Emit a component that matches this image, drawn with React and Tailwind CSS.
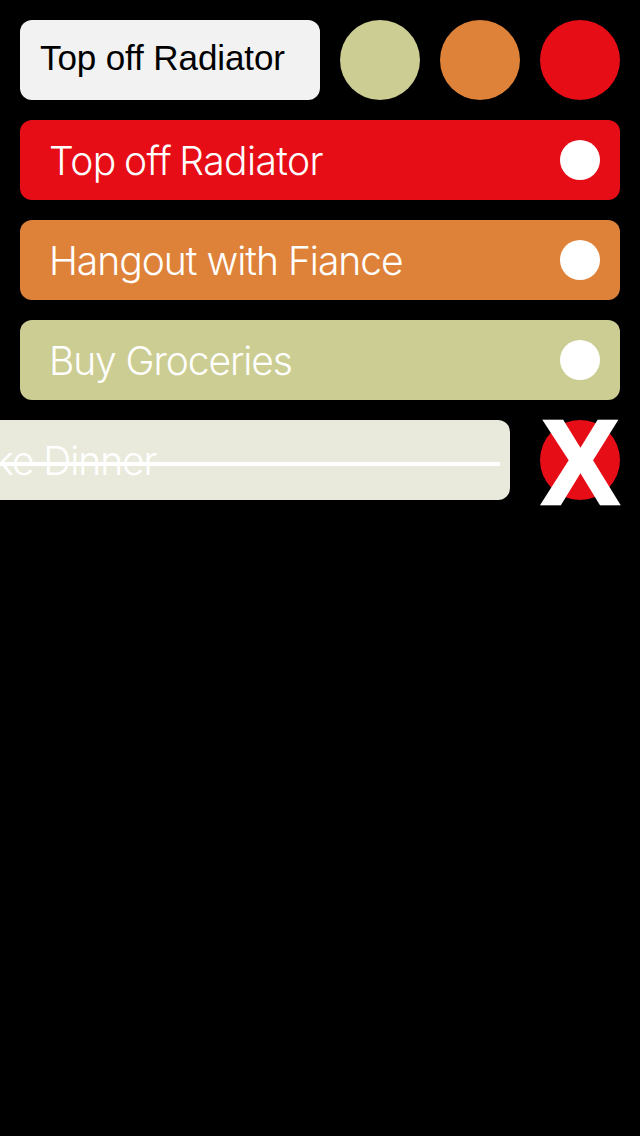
const tasks = [
  { label: 'Top off Radiator', bg: 'bg-[#e70d17]', text: '-ml-px tracking-[-0.6px] [word-spacing:-2px]' },
  { label: 'Hangout with Fiance', bg: 'bg-[#df8239]', text: '-ml-px tracking-[-1px]' },
  { label: 'Buy Groceries', bg: 'bg-[#cccd92]', text: '-ml-px tracking-[-1.1px]' },
];

const swatches = ['bg-[#cccd92]', 'bg-[#df8239]', 'bg-[#e70d17]'];

function Task({ label, bg, text }) {
  return (
    <li className={`flex h-20 items-center justify-between rounded-xl pl-[30px] pr-5 ${bg}`}>
      <span className={`whitespace-nowrap font-['Inter','Liberation_Sans',sans-serif] text-[39px] font-light leading-none text-white ${text}`}>{label}</span>
      <span className="size-10 rounded-full bg-white" />
    </li>
  );
}

export default function App() {
  return (
    <main className="flex h-[1136px] w-[640px] flex-col gap-5 overflow-hidden bg-black p-5">
      <header className="flex gap-5">
        <div className="flex h-20 w-[300px] items-center rounded-xl bg-[#f2f2f2] pl-5 pb-[5px]">
          <span className="whitespace-nowrap font-['Liberation_Sans',Arial,sans-serif] text-[35px] leading-none tracking-[-0.1px] text-black">Top off Radiator</span>
        </div>
        {swatches.map((bg) => (
          <button key={bg} className={`size-20 rounded-full ${bg}`} />
        ))}
      </header>
      <ul className="flex flex-col gap-5">
        {tasks.map((task) => (
          <Task key={task.label} {...task} />
        ))}
        <li className="flex justify-end gap-[30px]">
          <div className="relative flex h-20 w-[600px] shrink-0 items-center rounded-xl bg-[#e9eadb] pl-[30px]">
            <span className="-ml-px whitespace-nowrap font-['Inter','Liberation_Sans',sans-serif] text-[39px] font-light leading-none tracking-[-1.1px] text-white">Make Dinner</span>
            <span className="absolute left-2.5 right-2.5 top-[42px] h-1 bg-white" />
          </div>
          <button className="flex size-20 shrink-0 items-center justify-center rounded-full bg-[#e70d17]">
            <span className="inline-block scale-x-[0.97] pt-1 font-['Liberation_Sans',Arial,sans-serif] text-[121px] font-bold leading-none text-white [-webkit-text-stroke:2.5px_white]">X</span>
          </button>
        </li>
      </ul>
    </main>
  );
}
